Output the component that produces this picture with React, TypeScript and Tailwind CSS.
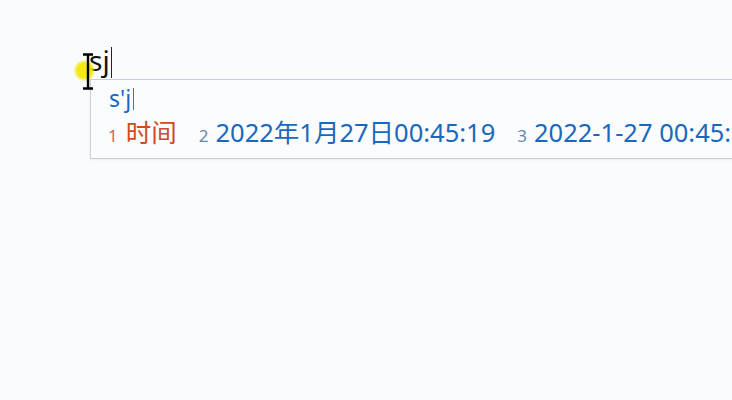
export default function App() {
  const font = { fontFamily: '"Noto Sans", "Noto Sans CJK SC", sans-serif' };
  return (
    <div className="relative h-[400px] w-[732px] overflow-hidden bg-[#fafbfd]" style={font}>
      {/* typed text in the editor */}
      <div className="flex items-start pl-[89px] pt-[42px]">
        <span className="text-[28px] leading-[37px] text-[#111]">sj</span>
        <span className="ml-[1px] mt-[5px] h-[31px] w-px bg-[#222]" />
      </div>

      {/* IME candidate window */}
      <div className="absolute left-[90px] top-[79px] h-[80px] w-[700px] border border-[#c9cdd6] bg-[#fbfcfe] shadow-[0_1px_2px_rgba(0,0,0,0.06)]">
        <div className="flex items-center pl-[18px] pt-[4px]">
          <span className="text-[23px] leading-[29px] text-[#1a68bd]">s'j</span>
          <span className="ml-[2px] h-[22px] w-px bg-[#d8461e]" />
        </div>
        <div className="flex items-baseline whitespace-nowrap pl-[17px] pt-[3px]">
          <span className="mr-[8px] text-[17px] text-[#e0604c]">1</span>
          <span className="text-[25.5px] leading-[33px] text-[#d24a1c]">时间</span>
          <span className="ml-[22px] mr-[7px] text-[17px] text-[#6688ad]">2</span>
          <span className="text-[25.5px] leading-[33px] text-[#1a68bd]">2022年1月27日00:45:19</span>
          <span className="ml-[22px] mr-[7px] text-[17px] text-[#6688ad]">3</span>
          <span className="text-[25.5px] leading-[33px] text-[#1a68bd]">2022-1-27 00:45:19</span>
        </div>
      </div>

      {/* mouse pointer highlight and I-beam */}
      <div className="absolute left-[75px] top-[61px] h-[19px] w-[19px] rounded-full bg-[#f2e600] opacity-90 blur-[1px]" />
      <svg className="absolute left-[82px] top-[53px]" width="12" height="37" viewBox="0 0 12 37">
        <path d="M1 1.5h10M1 35.5h10M6 1.5v34" stroke="#000" strokeWidth="2.4" fill="none" />
      </svg>
    </div>
  );
}
